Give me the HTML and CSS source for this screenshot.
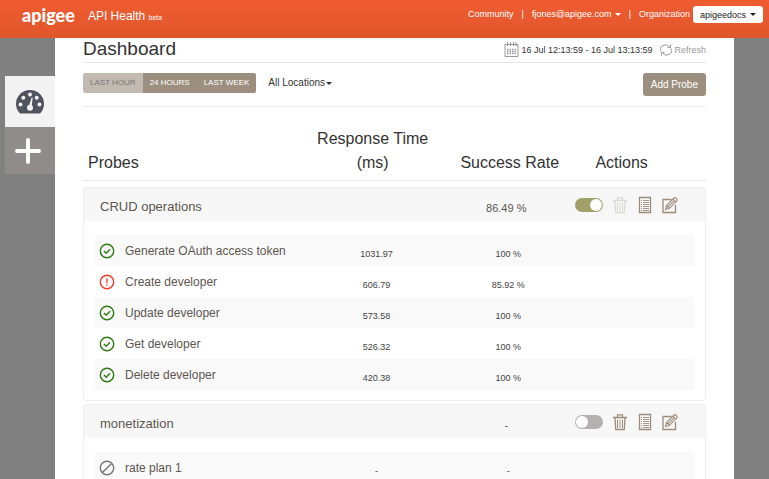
FILE: index.html
```html
<!DOCTYPE html>
<html lang="en">
<head>
<meta charset="utf-8">
<meta name="viewport" content="width=device-width, initial-scale=1">
<title>API Health</title>
<link rel="stylesheet" href="styles.css">
</head>
<body>
<svg class="sprite" aria-hidden="true">
  <symbol id="trash" viewBox="0 0 16 18"><path d="M1 4.5h14M5.5 4V1.8h5V4M3 5l.7 11.500h8.600L13 5"/><path d="M5.500 6.500v8.500M8 6.500v8.500M10.500 6.500v8.500" stroke-width="1"/></symbol>
  <symbol id="list" viewBox="0 0 16 18"><path d="M2.500 1.500h11v15h-11z"/><path d="M4 4.500h1M6 4.500h6M4 6.500h1M6 6.500h6M4 8.500h1M6 8.500h6M4 10.500h1M6 10.500h6M4 12.500h1M6 12.500h6M4 14.500h1M6 14.500h6" stroke-width=".9"/></symbol>
  <symbol id="edit" viewBox="0 0 16 18"><path d="M9.500 3.500H1v13h12.500V9"/><path d="M3.500 13.500l1-4L12 2q1-.8 2 .2l.8.8q.8 1 0 1.800L7.500 12.300zM4.500 9.500l3 2.800M10.800 3.200l3 2.800M6 10.900l6.300-6.200" stroke-width="1.100"/></symbol>
  <symbol id="ok" viewBox="0 0 16 16"><circle cx="8" cy="8" r="6.700"/><path d="M5 8l2.200 2.200L11 6.200"/></symbol>
  <symbol id="warn" viewBox="0 0 16 16"><circle cx="8" cy="8" r="6.700"/><path d="M8 4.500v4.700M8 10.600v1.200"/></symbol>
  <symbol id="off" viewBox="0 0 16 16"><circle cx="8" cy="8" r="6.700"/><path d="M3.400 12.600l9.200-9.200"/></symbol>
</svg>

<header class="topbar">
  <a class="logo" href="#">apigee</a>
  <span class="product">API Health <small>beta</small></span>
  <nav class="account">
    <a href="#">Community</a>
    <span class="bar">|</span>
    <a class="user caret" href="#">fjones@apigee.com</a>
    <span class="bar">|</span>
    <label for="org">Organization</label>
    <span class="org caret"><select id="org"><option>apigeedocs</option></select></span>
  </nav>
</header>

<div class="shell">
  <nav class="side">
    <a class="side-item current" href="#" aria-label="Dashboard">
      <svg width="30" height="26" viewBox="0 0 30 26"><path d="M4.500 24Q1 20 1 15a14 14 0 0 1 28 0q0 5-3.500 9-1 .5-2 .5h-17q-1 0-2-.5z" fill="#50545f"/><g fill="#f3f3f3"><circle cx="5.500" cy="15.500" r="2"/><circle cx="8.300" cy="8.800" r="2"/><circle cx="15" cy="5.500" r="2"/><circle cx="21.700" cy="8.800" r="2"/><circle cx="24.500" cy="15.500" r="2"/><circle cx="15" cy="18.700" r="3"/><path d="M13.500 18l3.200-9.500 1 .3-1.200 10z"/></g></svg>
    </a>
    <a class="side-item add" href="#" aria-label="Add">
      <svg width="26" height="26" viewBox="0 0 26 26"><path d="M13 2v22M2 13h22" stroke="#fff" stroke-width="4" stroke-linecap="round"/></svg>
    </a>
  </nav>

  <main class="page">
    <div class="titlebar">
      <h1>Dashboard</h1>
      <button class="range" type="button">
        <svg width="15" height="16" viewBox="0 0 15 16" fill="none" stroke="#999"><path d="M1 2.500h13v12H1zM3.500 0v4M6.500 0v4M9.500 0v4M12 0v4"/><path d="M3 7.500h9M3 9.500h9M3 11.500h9" stroke-dasharray="1.500 1" stroke-width="1.400"/></svg>
        16 Jul 12:13:59 - 16 Jul 13:13:59
      </button>
      <button class="refresh" type="button">
        <svg width="12" height="12" viewBox="0 0 12 12" fill="none" stroke="#999"><path d="M1 7.500A5 4.500 0 0 1 9.500 2.800M11 4.500A5 4.500 0 0 1 2.500 9.200M10.500.5v3h-3M1.500 11.500v-3h3"/></svg>
        Refresh
      </button>
    </div>

    <div class="toolbar">
      <div class="periods">
        <button type="button" class="selected">LAST HOUR</button>
        <button type="button">24 HOURS</button>
        <button type="button">LAST WEEK</button>
      </div>
      <span class="locations caret"><select aria-label="Location"><option>All Locations</option></select></span>
      <button class="primary" type="button">Add Probe</button>
    </div>

    <div class="columns">
      <h2>Probes</h2>
      <h2>Response Time (ms)</h2>
      <h2>Success Rate</h2>
      <h2>Actions</h2>
    </div>

    <section class="card">
      <div class="card-head">
        <h3>CRUD operations</h3>
        <span class="rate">86.49 %</span>
        <div class="actions">
          <input type="checkbox" class="switch" aria-label="CRUD operations enabled" checked>
          <button type="button" aria-label="Delete" disabled><svg class="icon"><use href="#trash"/></svg></button>
          <button type="button" aria-label="Log"><svg class="icon"><use href="#list"/></svg></button>
          <button type="button" aria-label="Edit"><svg class="icon"><use href="#edit"/></svg></button>
        </div>
      </div>
      <table class="probes">
        <tr><th scope="row"><svg class="status ok"><use href="#ok"/></svg>Generate OAuth access token</th><td>1031.97</td><td>100 %</td><td></td></tr>
        <tr><th scope="row"><svg class="status warn"><use href="#warn"/></svg>Create developer</th><td>606.79</td><td>85.92 %</td><td></td></tr>
        <tr><th scope="row"><svg class="status ok"><use href="#ok"/></svg>Update developer</th><td>573.58</td><td>100 %</td><td></td></tr>
        <tr><th scope="row"><svg class="status ok"><use href="#ok"/></svg>Get developer</th><td>526.32</td><td>100 %</td><td></td></tr>
        <tr><th scope="row"><svg class="status ok"><use href="#ok"/></svg>Delete developer</th><td>420.38</td><td>100 %</td><td></td></tr>
      </table>
    </section>

    <section class="card">
      <div class="card-head">
        <h3>monetization</h3>
        <span class="rate">-</span>
        <div class="actions">
          <input type="checkbox" class="switch" aria-label="monetization enabled">
          <button type="button" aria-label="Delete"><svg class="icon"><use href="#trash"/></svg></button>
          <button type="button" aria-label="Log"><svg class="icon"><use href="#list"/></svg></button>
          <button type="button" aria-label="Edit"><svg class="icon"><use href="#edit"/></svg></button>
        </div>
      </div>
      <table class="probes">
        <tr><th scope="row"><svg class="status off"><use href="#off"/></svg>rate plan 1</th><td>-</td><td>-</td><td></td></tr>
      </table>
    </section>
  </main>
</div>
</body>
</html>
```
FILE: styles.css
```css
* { box-sizing: border-box; }

html { overflow: hidden; }

body {
  margin: 0;
  height: 100vh;
  overflow: hidden;
  display: flex;
  flex-direction: column;
  background: #808080;
  color: #333;
  font: 9px/12px "Liberation Sans", Arial, sans-serif;
}

h1, h2, h3 { margin: 0; font-weight: 400; }
a { color: inherit; text-decoration: none; }
button, select, input { font: inherit; color: inherit; margin: 0; padding: 0; border: 0; background: none; }
select { appearance: none; }
svg { display: block; flex: none; }
.sprite { position: absolute; width: 0; height: 0; }

.caret { display: inline-flex; align-items: center; }
.caret::after {
  content: "";
  margin-left: 3px;
  border: 3px solid transparent;
  border-top-color: currentColor;
  border-bottom: 0;
  pointer-events: none;
}

.topbar {
  flex: none;
  display: flex;
  align-items: flex-start;
  height: 38px;
  padding: 6px 6px 0 22px;
  background: linear-gradient(#f05c31, #e0562c);
  color: #fff;
}
.logo { font: 900 18px/19px Lato, "Liberation Sans", sans-serif; }
.product { margin-left: 13px; font-size: 12px; line-height: 20px; }
.product small { font-size: 7px; }
.account { display: flex; align-items: flex-start; margin-left: auto; line-height: 16px; }
.account .bar { margin: 0 8px; }
.org {
  height: 17px;
  margin-left: 3px;
  padding: 0 7px;
  border-radius: 3px;
  background: #fff;
  color: #222;
}

.shell { flex: 1; min-height: 0; display: flex; padding: 0 35px 0 5px; }
.side { flex: none; width: 50px; padding-top: 38px; }
.side-item { display: flex; align-items: center; justify-content: center; height: 47px; }
.side-item.current { height: 51px; background: #f3f3f3; }
.side-item.add { background: #908c8c; padding-right: 4px; }

.page { flex: 1; min-width: 0; padding: 0 28px; background: #fff; }

.titlebar {
  display: flex;
  align-items: center;
  height: 25px;
  border-bottom: 1px solid #e8e8e8;
}
.titlebar h1 { margin-right: auto; font-size: 19px; line-height: 22px; padding-bottom: 2px; }
.titlebar button { display: flex; align-items: center; gap: 2px; }
.titlebar .refresh { margin-left: 8px; color: #999; }

.toolbar {
  display: flex;
  align-items: flex-start;
  height: 44px;
  padding-top: 10px;
  border-bottom: 1px solid #eee;
}
.periods { display: flex; border-radius: 2px; overflow: hidden; }
.periods button { height: 20px; padding: 0 7px; font-size: 8px; font-weight: 400; background: #9c8f80; color: #fff; }
.periods .selected { background: #c2bab0; color: #777; }
.locations { height: 20px; margin-left: 12px; font-size: 10px; }
.locations::after { margin-left: 1px; }
.primary {
  height: 23px;
  margin-left: auto;
  padding: 0 8px;
  border-radius: 3px;
  background: #9c8f80;
  color: #fff;
  font-size: 10px;
}

.columns {
  display: grid;
  grid-template-columns: 36% 21% 23% 20%;
  align-items: end;
  padding: 20px 0 5px;
  border-bottom: 1px solid #e8e8e8;
  text-align: center;
}
.columns h2 { font-size: 16px; line-height: 24px; }
.columns h2:first-child { padding-left: 5px; text-align: left; }
.columns h2:last-child { padding-left: 14px; text-align: left; }

.card { margin: 6px 0 3px; border: 1px solid #eee; border-radius: 3px; color: #5c564f; }
.card-head {
  display: grid;
  grid-template-columns: 57% 22% 21%;
  align-items: center;
  height: 33px;
  background: #f7f7f7;
}
.card + .card { margin-top: 3px; }
.card-head h3 { padding: 5px 0 0 16px; font-size: 13px; line-height: 16px; }
.rate { padding-top: 7px; text-align: center; font-size: 11px; }
.actions { display: flex; align-items: center; gap: 9px; }
.actions button { color: #9c8b7b; }
.actions button:disabled { color: #dcdcd4; }
.icon { width: 16px; height: 18px; fill: none; stroke: currentColor; stroke-width: 1.3; }

.switch {
  appearance: none;
  display: flex;
  width: 28px;
  height: 14px;
  padding: 1px;
  border-radius: 7px;
  background: #b5b0b0;
}
.switch::before { content: ""; width: 12px; height: 12px; border-radius: 50%; background: #fff; }
.switch:checked { justify-content: flex-end; background: #a0a068; }

.probes {
  width: calc(100% - 22px);
  margin: 14px 11px 10px;
  border-collapse: collapse;
  table-layout: fixed;
}
.probes tr { height: 31px; }
.probes tr:nth-child(odd) { background: #f9f9f9; }
.probes th, .probes td { padding: 0; }
.probes th { width: 37%; padding-top: 2px; text-align: left; font-size: 12px; font-weight: 400; white-space: nowrap; }
.probes td { width: 20%; padding-top: 7px; text-align: center; color: #444; }
.probes td:nth-child(3) { width: 24%; }
.probes td:last-child { width: 19%; }
.status {
  display: inline-block;
  width: 16px;
  height: 16px;
  margin: 0 10px 2px 4px;
  vertical-align: middle;
  fill: none;
  stroke: currentColor;
  stroke-width: 1.4;
}
.status.ok { color: #2f7a14; }
.status.warn { color: #ee3b2e; }
.status.off { color: #777; }
```
